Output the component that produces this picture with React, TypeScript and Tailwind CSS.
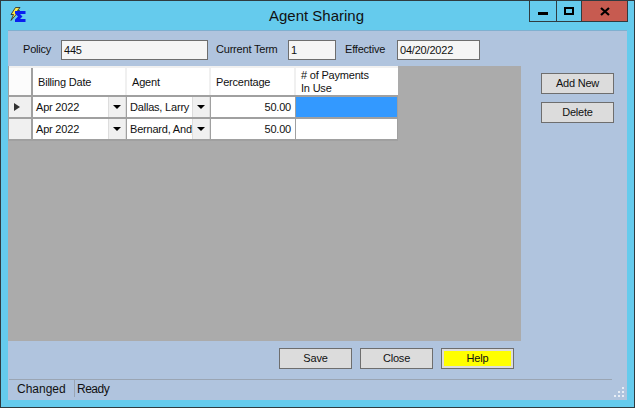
const font = { fontFamily: '"Liberation Sans", Arial, sans-serif' }

function Field({ value, className }: { value: string; className: string }) {
  return (
    <div className={`h-[20px] border border-[#6e6e6e] bg-[#f5f5f5] pl-[2px] text-[11px] leading-[18px] tracking-[-0.2px] text-[#111] ${className}`}>
      {value}
    </div>
  )
}

function Btn({ label, yellow = false }: { label: string; yellow?: boolean }) {
  return (
    <button className="h-[21px] w-[73px] border border-[#6e6e6e] bg-[#dcdcdc] text-[11px] leading-[15px] tracking-[-0.2px] text-[#111]">
      {yellow ? <span className="m-[2px] block h-[15px] bg-[#ffff00]">{label}</span> : label}
    </button>
  )
}

function Arrow() {
  return (
    <div className="flex w-[18px] shrink-0 items-center justify-center border-x border-[#dddddd] bg-[#f0f0f0]">
      <div className="h-0 w-0 border-x-[4px] border-t-[4px] border-x-transparent border-t-black" />
    </div>
  )
}

function Row({ agent, active }: { agent: string; active?: boolean }) {
  return (
    <div className="flex h-[22px] border-b-[2px] border-[#a0a0a0] bg-white text-[11px] leading-[21px] tracking-[-0.2px] text-[#111]">
      <div className="flex w-[24px] shrink-0 items-center border-r-2 border-[#a0a0a0] bg-[#f0f0f0] pl-[5px]">
        {active && <div className="h-0 w-0 border-y-[4px] border-l-[6px] border-y-transparent border-l-[#333]" />}
      </div>
      <div className="flex w-[94px] shrink-0 border-r-[1px] border-[#a0a0a0]">
        <div className="flex-1 pl-[3px]">Apr 2022</div>
        <Arrow />
      </div>
      <div className="flex w-[84px] shrink-0 border-r-[1px] border-[#a0a0a0]">
        <div className="w-[65px] overflow-hidden whitespace-nowrap pl-[3px]">{agent}</div>
        <Arrow />
      </div>
      <div className="w-[85px] shrink-0 border-r-[1px] border-[#a0a0a0] pr-[4px] text-right">50.00</div>
      <div className={`w-[102px] shrink-0 border-r-[1px] border-[#a0a0a0] ${active ? "bg-[#3399ff]" : ""}`} />
    </div>
  )
}

export default function App() {
  return (
    <div style={font} className="flex h-[408px] w-[635px] flex-col overflow-hidden border border-[#2f3b40] bg-[#65cbed] text-[#111]">
      {/* Title bar */}
      <div className="relative flex h-[29px] shrink-0 items-start">
        <svg className="ml-[9px] mt-[6px]" width="17" height="16" viewBox="0 0 17 16">
          <path d="M5.5 0.5 L10 0.5 L7.5 3.5 L9.5 3.5 L1 13.5 L3.5 7.5 L1 7.5 Z" fill="#ffe94a" stroke="#222" strokeWidth="0.8" />
          <path d="M5 4 H15.5 V7 H10 L12.5 9.5 L10 12 H15.5 V15 H5 V12.5 L8 9.5 L5 6.5 Z" fill="#0a1ff0" />
        </svg>
        <div className="absolute inset-x-0 top-[6px] pr-[2px] text-center text-[15px] leading-[18px] text-[#111]">Agent Sharing</div>
        <div className="absolute right-[6px] top-[-1px] flex h-[22px] border border-[#2f3b40]">
          <div className="flex w-[27px] items-center justify-center border-r border-[#2f3b40]">
            <div className="mt-[4px] h-[3px] w-[10px] bg-black" />
          </div>
          <div className="flex w-[25px] items-center justify-center border-r border-[#2f3b40]">
            <div className="h-[8px] w-[10px] border-2 border-black" />
          </div>
          <div className="flex w-[45px] items-center justify-center bg-[#c75b50]">
            <svg width="10" height="9" viewBox="0 0 10 9">
              <path d="M1 1 L9 8 M9 1 L1 8" stroke="#000" strokeWidth="2.2" />
            </svg>
          </div>
        </div>
      </div>

      {/* Form panel */}
      <div className="relative mx-[7px] flex h-[370px] flex-col border-t border-[#7fb0d0] bg-[#b0c4de]">
        <div className="flex h-[35px] shrink-0 items-center pt-[2px] text-[11px] tracking-[-0.2px]">
          <span className="ml-[15px] w-[38px]">Policy</span>
          <Field value="445" className="w-[147px]" />
          <span className="ml-[8px] w-[72px]">Current Term</span>
          <Field value="1" className="w-[48px]" />
          <span className="ml-[9px] w-[52px]">Effective</span>
          <Field value="04/20/2022" className="w-[83px]" />
        </div>

        <div className="flex h-[275px] shrink-0">
          {/* Grid */}
          <div className="w-[513px] shrink-0 bg-[#ababab]">
            <div className="w-[390px] border-l border-[#a0a0a0]">
              <div className="flex h-[31px] border-t-[2px] border-b-[2px] border-t-[#f0f0f0] border-b-[#a0a0a0] bg-[#f0f0f0] text-[11px] tracking-[-0.2px] text-[#111]">
                <div className="w-[24px] shrink-0 border-r-2 border-[#a0a0a0] bg-[#fcfcfc]" />
                <div className="flex w-[94px] shrink-0 items-center border-r-2 border-[#f0f0f0] bg-white pl-[5px] pt-[2px]">Billing Date</div>
                <div className="flex w-[84px] shrink-0 items-center border-r-2 border-[#f0f0f0] bg-white pl-[5px] pt-[2px]">Agent</div>
                <div className="flex w-[85px] shrink-0 items-center border-r-2 border-[#f0f0f0] bg-white pl-[5px] pt-[2px]">Percentage</div>
                <div className="flex w-[102px] shrink-0 items-center bg-white pl-[5px] leading-[13px]">
                  # of Payments
                  <br />
                  In Use
                </div>
              </div>
              <Row agent="Dallas, Larry" active />
              <Row agent="Bernard, Andy" />
            </div>
          </div>
          {/* Side buttons */}
          <div className="ml-[20px] flex flex-col gap-[8px] pt-[7px]">
            <Btn label="Add New" />
            <Btn label="Delete" />
          </div>
        </div>

        <div className="flex h-[38px] shrink-0 items-start gap-[8px] pl-[271px] pt-[7px]">
          <Btn label="Save" />
          <Btn label="Close" />
          <Btn label="Help" yellow />
        </div>

        {/* Status bar */}
        <div className="ml-[1px] mr-[15px] flex h-[20px] border-t border-[#9aa5b3] text-[12px] leading-[18px]">
          <div className="mb-[2px] w-[66px] border-r-[1px] border-[#9aa5b3] pl-[8px]">Changed</div>
          <div className="pl-[2px] tracking-[-0.5px]">Ready</div>
        </div>
        <svg className="absolute bottom-[2px] right-[1px]" width="12" height="12" viewBox="0 0 12 12">
          <g fill="#e8eef6">
            <rect x="8" y="1" width="2" height="2" />
            <rect x="4" y="5" width="2" height="2" />
            <rect x="8" y="5" width="2" height="2" />
            <rect x="0" y="9" width="2" height="2" />
            <rect x="4" y="9" width="2" height="2" />
            <rect x="8" y="9" width="2" height="2" />
          </g>
        </svg>
      </div>
    </div>
  )
}
